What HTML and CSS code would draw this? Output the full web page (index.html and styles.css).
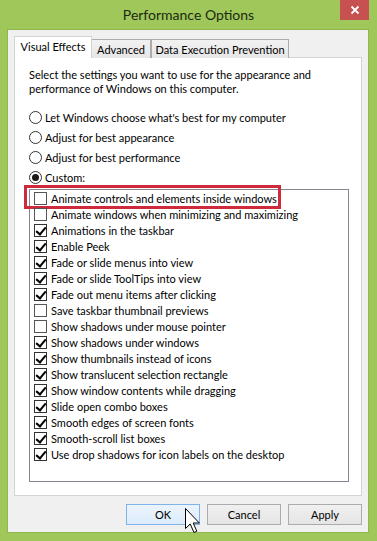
FILE: index.html
```html
<!DOCTYPE html>
<html>
<head>
<meta charset="utf-8">
<title>Performance Options</title>
<link rel="stylesheet" href="styles.css">
</head>
<body>
<div class="window">
  <div class="titlebar">
    <span class="spacer"></span>
    <div class="title">Performance Options</div>
    <button class="close" aria-label="Close">
      <svg width="10" height="10" viewBox="0 0 10 10"><path d="M1.5 1.5 L8.5 8.5 M8.5 1.5 L1.5 8.5" stroke="#fff" stroke-width="1.8" fill="none"/></svg>
    </button>
  </div>
  <div class="client">
    <div class="tabs">
      <div class="tab active tab-ve">Visual Effects</div>
      <div class="tab tab-adv">Advanced</div>
      <div class="tab tab-dep">Data Execution Prevention</div>
    </div>
    <div class="panel">
      <p class="intro">Select the settings you want to use for the appearance and<br>performance of Windows on this computer.</p>
      <div class="radios">
        <div class="radio"><span class="rb"></span>Let Windows choose what's best for my computer</div>
        <div class="radio"><span class="rb"></span>Adjust for best appearance</div>
        <div class="radio"><span class="rb"></span>Adjust for best performance</div>
        <div class="radio"><span class="rb on"></span>Custom:</div>
      </div>
      <div class="listbox">
        <div class="row"><span class="cb"></span>Animate controls and elements inside windows<span class="highlight"></span></div>
        <div class="row"><span class="cb"></span>Animate windows when minimizing and maximizing</div>
        <div class="row"><span class="cb on"></span>Animations in the taskbar</div>
        <div class="row"><span class="cb on"></span>Enable Peek</div>
        <div class="row"><span class="cb on"></span>Fade or slide menus into view</div>
        <div class="row"><span class="cb on"></span>Fade or slide ToolTips into view</div>
        <div class="row"><span class="cb on"></span>Fade out menu items after clicking</div>
        <div class="row"><span class="cb"></span>Save taskbar thumbnail previews</div>
        <div class="row"><span class="cb"></span>Show shadows under mouse pointer</div>
        <div class="row"><span class="cb on"></span>Show shadows under windows</div>
        <div class="row"><span class="cb on"></span>Show thumbnails instead of icons</div>
        <div class="row"><span class="cb on"></span>Show translucent selection rectangle</div>
        <div class="row"><span class="cb on"></span>Show window contents while dragging</div>
        <div class="row"><span class="cb on"></span>Slide open combo boxes</div>
        <div class="row"><span class="cb on"></span>Smooth edges of screen fonts</div>
        <div class="row"><span class="cb on"></span>Smooth-scroll list boxes</div>
        <div class="row"><span class="cb on"></span>Use drop shadows for icon labels on the desktop</div>
      </div>
    </div>
    <div class="buttons">
      <button class="btn btn-hover">OK</button>
      <button class="btn">Cancel</button>
      <button class="btn">Apply</button>
    </div>
  </div>
  <svg class="cursor" width="15" height="26" viewBox="0 0 15 26">
    <path d="M0.5 0.5 V20.5 L5.2 16 L9 24.5 L11.8 23.2 L8.2 15 H14.3 Z" fill="#fff" stroke="#000" stroke-width="1" stroke-linejoin="miter"/>
  </svg>
</div>
</body>
</html>
```
FILE: styles.css
```css
* { box-sizing: border-box; }
html, body { margin: 0; padding: 0; }
body {
  font-family: Lato, "Liberation Sans", sans-serif;
  font-size: 11px;
  color: #000;
  background: #9fc75a;
}
.window {
  width: 377px;
  height: 541px;
  background: #9fc75a;
  position: relative;
  overflow: hidden;
}
.titlebar {
  height: 30px;
  display: grid;
  grid-template-columns: 1fr auto 1fr;
  padding: 0 8px;
}
.title {
  align-self: center;
  font-size: 14px;
  color: #1c2a12;
  padding-bottom: 1px;
}
.close {
  justify-self: end;
  align-self: start;
  width: 29px;
  height: 20px;
  border: 0;
  padding: 0;
  background: #c75050;
  display: flex;
  align-items: center;
  justify-content: center;
}
.client {
  margin-left: 8px;
  width: 360px;
  height: 502px;
  background: #f0f0f0;
  padding: 6px 6px 0 6px;
  box-shadow: 0 0 0 1px #8fb651;
}
.tabs {
  display: flex;
  align-items: flex-end;
  height: 22px;
  margin-bottom: -1px;
}
.tab {
  height: 19px;
  border: 1px solid #acacac;
  border-bottom: none;
  background: linear-gradient(#f2f2f2, #e6e6e6);
  text-align: center;
  line-height: 18px;
  padding-top: 1px;
  white-space: nowrap;
}
.tab.active {
  height: 22px;
  background: #fff;
  border-color: #d4d4d4;
  position: relative;
  z-index: 2;
  line-height: 20px;
  padding-top: 0;
}
.tab-ve { width: 78px; }
.tab-adv { width: 59px; border-left: none; }
.tab-dep { width: 138px; border-left: 1px solid #acacac; }
.panel {
  background: #fff;
  border: 1px solid #d4d4d4;
  padding: 10px 12px 13px 14px;
}
.intro {
  margin: 0;
  line-height: 14px;
}
.radios {
  margin-top: 11px;
}
.radio {
  height: 20px;
  display: flex;
  align-items: center;
  gap: 3px;
}
.rb {
  width: 13px;
  height: 13px;
  border: 1px solid #333;
  border-radius: 50%;
  background: #fff;
  display: flex;
  align-items: center;
  justify-content: center;
  flex: none;
}
.rb.on::after {
  content: "";
  width: 7px;
  height: 7px;
  border-radius: 50%;
  background: #1a1a1a;
}
.listbox {
  margin-top: 2px;
  height: 293px;
  border: 1px solid #828790;
}
.row {
  height: 16px;
  display: flex;
  align-items: center;
  gap: 4px;
  padding-left: 4px;
  position: relative;
  white-space: nowrap;
}
.cb {
  width: 13px;
  height: 13px;
  border: 1px solid #555;
  background: #fff;
  flex: none;
  position: relative;
}
.cb.on {
  border-color: #333;
}
.cb.on::after {
  content: "";
  position: absolute;
  left: 3px;
  top: 0px;
  width: 4px;
  height: 8px;
  border-right: 2px solid #000;
  border-bottom: 2px solid #000;
  transform: rotate(40deg);
}
.highlight {
  position: absolute;
  left: -6px;
  top: -5px;
  width: 257px;
  height: 24px;
  border: 3px solid #cf2a3c;
  pointer-events: none;
}
.buttons {
  margin-top: 8px;
  display: flex;
  justify-content: flex-end;
  gap: 7px;
}
.btn {
  width: 74px;
  height: 21px;
  border: 1px solid #acacac;
  background: linear-gradient(#f0f0f0, #e5e5e5);
  font-family: Lato, "Liberation Sans", sans-serif;
  font-size: 11px;
  color: #000;
  padding: 0;
}
.btn-hover {
  border-color: #7eb4ea;
  background: linear-gradient(#ecf4fc, #dcecfc);
}
.cursor {
  position: absolute;
  left: 185px;
  top: 508px;
}
```
